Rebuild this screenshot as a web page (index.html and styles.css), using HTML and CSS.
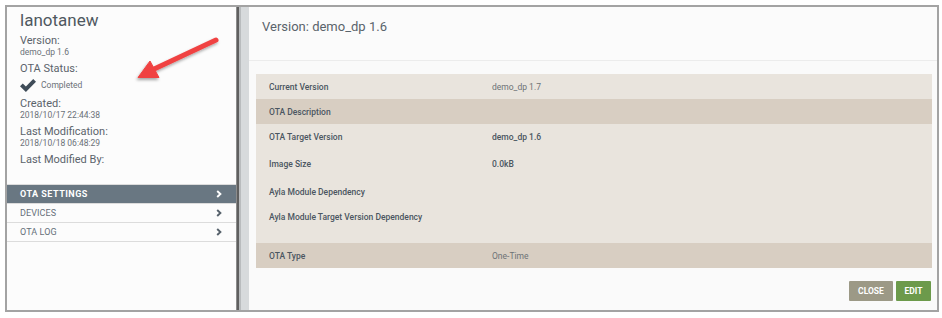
FILE: index.html
```html
<!DOCTYPE html>
<html lang="en">
<head>
    <meta charset="UTF-8">
    <meta name="viewport" content="width=device-width, initial-scale=1.0">
    <title>OTA Version</title>
    <link rel="stylesheet" href="styles.css">
</head>
<body>
    <div class="frame">
        <div class="sidebar">
            <div class="info">
                <div class="name">lanotanew</div>
                <div class="field">
                    <div class="label">Version:</div>
                    <div class="value">demo_dp 1.6</div>
                </div>
                <div class="field">
                    <div class="label">OTA Status:</div>
                    <div class="status">
                        <svg class="check" width="16" height="13" viewBox="0 0 16 13">
                            <path d="M0 7.2 L2.8 4.4 L5.9 7.4 L13.2 0 L16 2.8 L5.9 12.9 Z" fill="#3f4c58"/>
                        </svg>
                        <span>Completed</span>
                    </div>
                </div>
                <div class="field">
                    <div class="label">Created:</div>
                    <div class="value">2018/10/17 22:44:38</div>
                </div>
                <div class="field">
                    <div class="label">Last Modification:</div>
                    <div class="value">2018/10/18 06:48:29</div>
                </div>
                <div class="field">
                    <div class="label">Last Modified By:</div>
                </div>
            </div>
            <ul class="menu">
                <li class="menu-item active">OTA SETTINGS
                    <svg class="chevron" width="6" height="8" viewBox="0 0 6 8"><path d="M1.2 1 L4.4 4 L1.2 7" fill="none" stroke="currentColor" stroke-width="1.9"/></svg>
                </li>
                <li class="menu-item">DEVICES
                    <svg class="chevron" width="6" height="8" viewBox="0 0 6 8"><path d="M1.2 1 L4.4 4 L1.2 7" fill="none" stroke="currentColor" stroke-width="1.9"/></svg>
                </li>
                <li class="menu-item">OTA LOG
                    <svg class="chevron" width="6" height="8" viewBox="0 0 6 8"><path d="M1.2 1 L4.4 4 L1.2 7" fill="none" stroke="currentColor" stroke-width="1.9"/></svg>
                </li>
            </ul>
        </div>
        <div class="divider"></div>
        <div class="main">
            <div class="header">Version: demo_dp 1.6</div>
            <div class="table">
                <div class="row light">
                    <div class="key">Current Version</div>
                    <div class="val">demo_dp 1.7</div>
                </div>
                <div class="row dark">
                    <div class="key">OTA Description</div>
                    <div class="val"></div>
                </div>
                <div class="group light">
                    <div class="row r1">
                        <div class="key">OTA Target Version</div>
                        <div class="val strong">demo_dp 1.6</div>
                    </div>
                    <div class="row r2">
                        <div class="key">Image Size</div>
                        <div class="val strong">0.0kB</div>
                    </div>
                    <div class="row r2">
                        <div class="key">Ayla Module Dependency</div>
                        <div class="val"></div>
                    </div>
                    <div class="row r3">
                        <div class="key">Ayla Module Target Version Dependency</div>
                        <div class="val"></div>
                    </div>
                </div>
                <div class="row dark">
                    <div class="key">OTA Type</div>
                    <div class="val">One-Time</div>
                </div>
            </div>
            <div class="actions">
                <button class="btn btn-close">CLOSE</button>
                <button class="btn btn-edit">EDIT</button>
            </div>
        </div>

        <!-- annotation arrow drawn over the sidebar -->
        <svg class="arrow" width="120" height="70" viewBox="120 30 120 70">
            <defs>
                <filter id="shadow" x="-30%" y="-30%" width="160%" height="160%">
                    <feDropShadow dx="-1" dy="2" stdDeviation="1.4" flood-color="#000" flood-opacity="0.35"/>
                </filter>
            </defs>
            <g filter="url(#shadow)" fill="#f04343" stroke="#f04343">
                <line x1="216" y1="40" x2="152" y2="70" stroke-width="5" stroke-linecap="round"/>
                <polygon points="138,77.5 150,61 159,77.5" stroke-width="1" stroke-linejoin="round"/>
            </g>
        </svg>
    </div>
</body>
</html>
```

FILE: styles.css
```css
body {
    margin: 0;
    background: #ffffff;
    font-family: Roboto, "Liberation Sans", Arial, sans-serif;
}
.frame {
    position: relative;
    display: flex;
    margin: 5px 0 0 5px;
    width: 930px;
    height: 303px;
    border: 2px solid #a3a3a3;
    background: #fafafa;
}
.sidebar {
    width: 229px;
    background: #fcfcfc;
    display: flex;
    flex-direction: column;
}
.info {
    padding: 3px 0 0 13px;
    color: #5b636b;
}
.name {
    font-size: 17px;
    line-height: 20px;
    font-weight: 400;
    color: #4f5860;
}
.field {
    margin-top: 5px;
}
.field:first-of-type {
    margin-top: 1px;
}
.label {
    font-size: 11px;
    line-height: 12px;
}
.value {
    font-size: 8.5px;
    line-height: 11px;
    color: #6b7178;
}
.status {
    display: flex;
    align-items: center;
    gap: 5px;
    height: 16px;
    margin-top: 2px;
    font-size: 8.5px;
    color: #6b7178;
}
.menu {
    list-style: none;
    margin: 18px 0 0 0;
    padding: 0;
    border-top: 1px solid #dcdcdc;
}
.menu-item {
    display: flex;
    justify-content: space-between;
    align-items: center;
    height: 18px;
    padding: 0 14px 0 13px;
    border-bottom: 1px solid #dcdcdc;
    font-size: 9px;
    letter-spacing: 0.1px;
    color: #66707a;
}
.menu-item.active {
    background: #697782;
    color: #ffffff;
    font-weight: 700;
    letter-spacing: 0.5px;
}
.chevron {
    color: #56616b;
}
.menu-item.active .chevron {
    color: #ffffff;
}
.divider {
    width: 13px;
    background: linear-gradient(to right, #8c8c8c 0, #8c8c8c 1px, #5f5f5f 1px, #5f5f5f 3px, #b9bcbe 3px, #b9bcbe 5px, #d7dadc 5px);
}
.main {
    flex: 1;
    display: flex;
    flex-direction: column;
    background: #fafafa;
}
.header {
    height: 43px;
    padding: 10px 13px 0 13px;
    border-bottom: 1px solid #ececec;
    font-size: 13px;
    line-height: 20px;
    color: #5a636b;
    background: #fbfbfb;
}
.table {
    margin: 13px 5px 0 7px;
    font-size: 8.5px;
    color: #4b5661;
}
.row {
    display: flex;
    align-items: center;
    height: 25px;
}
.light {
    background: #e9e4dd;
}
.dark {
    background: #d8cec2;
}
.group {
    padding-bottom: 15px;
}
.group .row.r1 {
    height: 26px;
}
.group .row.r2 {
    height: 28px;
}
.group .row.r3 {
    height: 22px;
}
.key {
    width: 223px;
    padding-left: 13px;
    font-weight: 500;
}
.val {
    color: #6d7276;
}
.val.strong {
    color: #4b5661;
    font-weight: 500;
}
.actions {
    display: flex;
    justify-content: flex-end;
    gap: 3px;
    margin: 13px 6px 0 0;
}
.btn {
    height: 20px;
    border: none;
    border-radius: 1px;
    color: #ffffff;
    font-family: Roboto, "Liberation Sans", Arial, sans-serif;
    font-size: 8.5px;
    font-weight: 700;
    padding: 0;
    cursor: pointer;
}
.btn-close {
    width: 44px;
    background: #9c9986;
}
.btn-edit {
    width: 35px;
    background: #6c9a4b;
}
.arrow {
    position: absolute;
    left: 113px;
    top: 23px;
}
```
